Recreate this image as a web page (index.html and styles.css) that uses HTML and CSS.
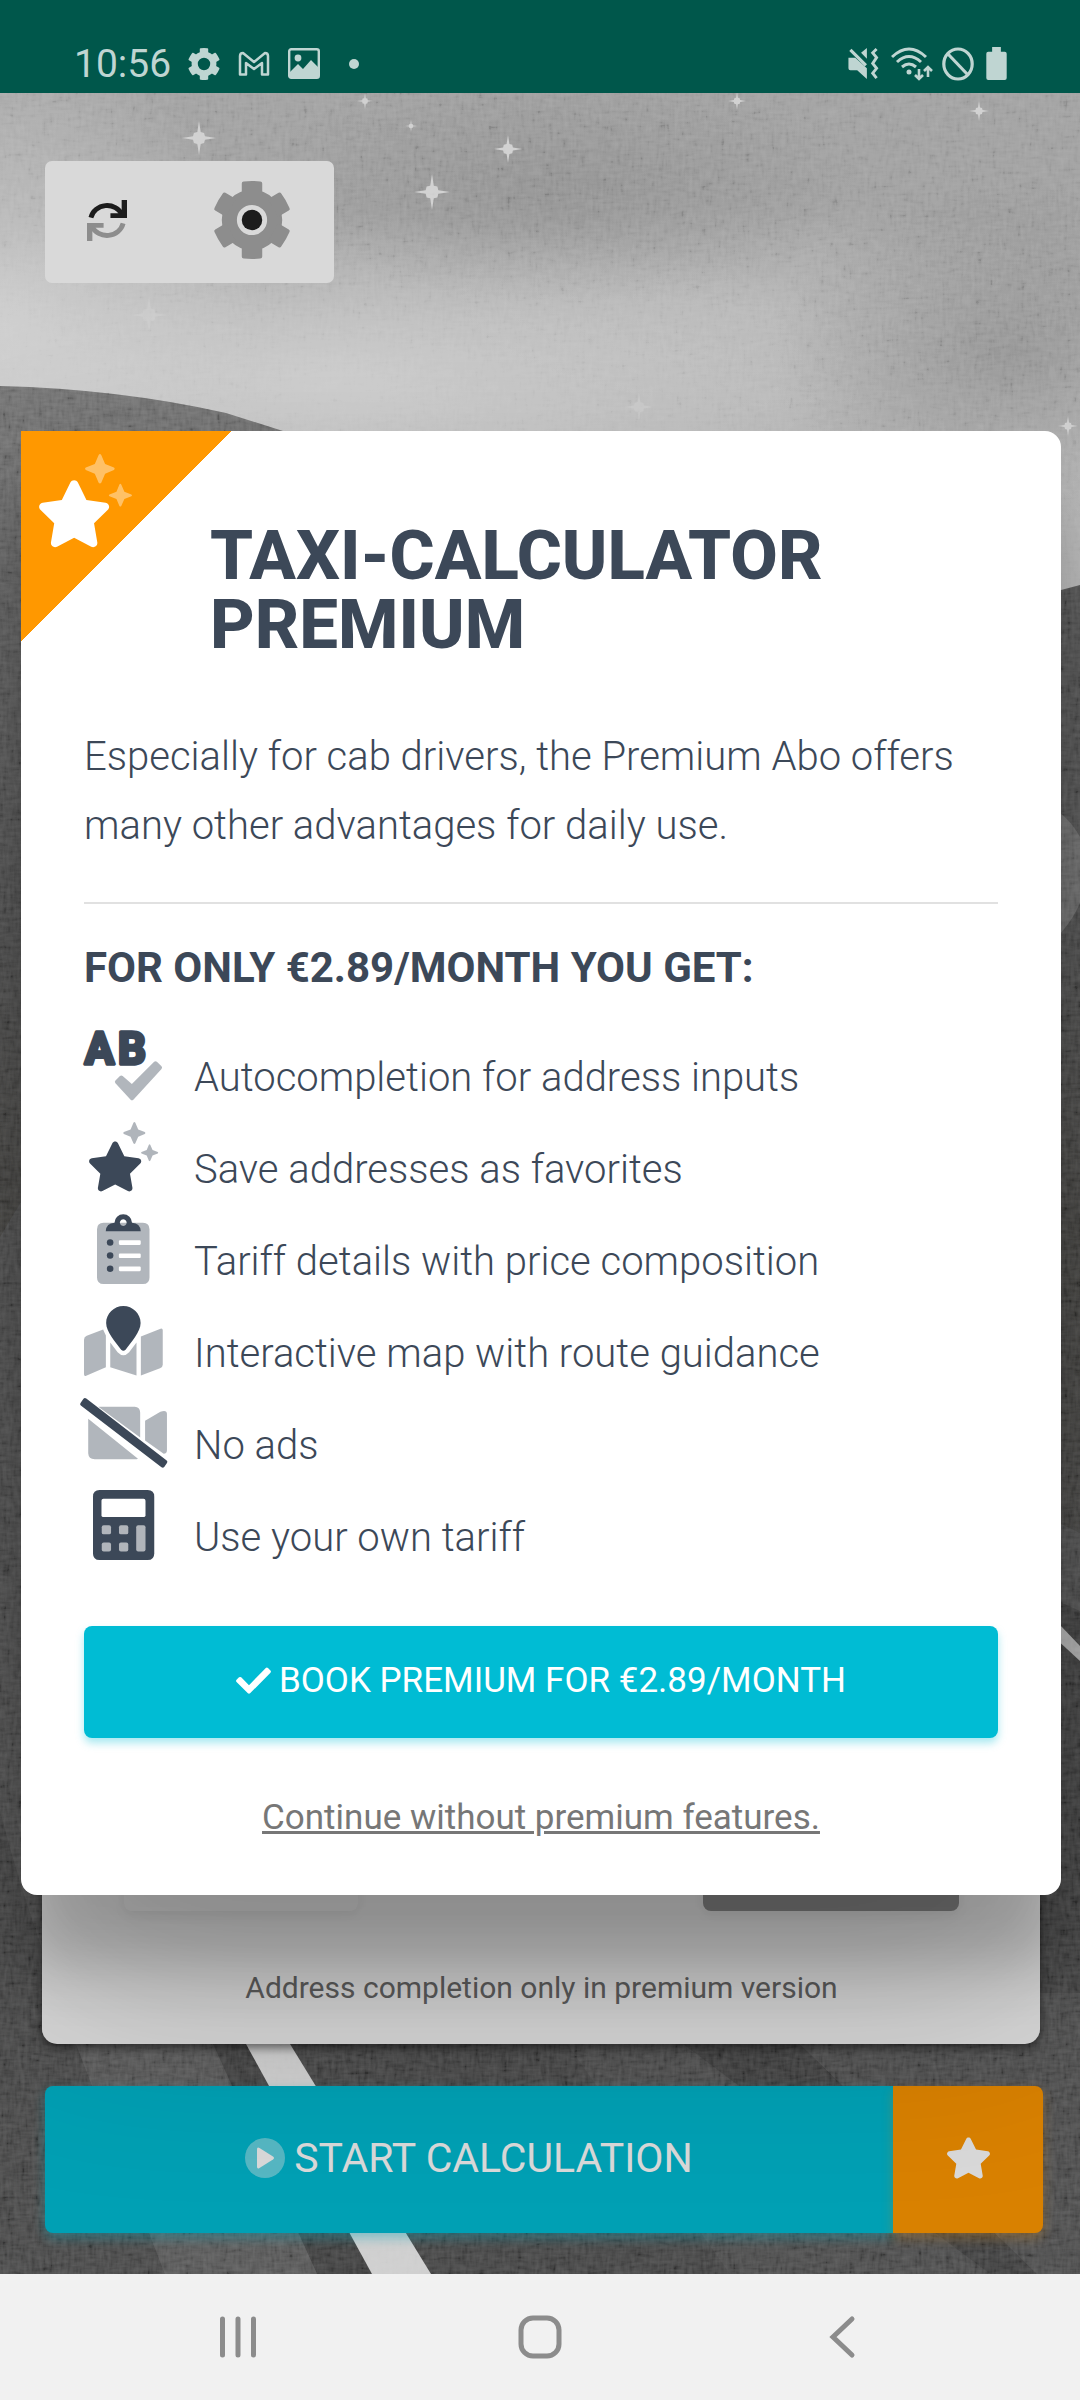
FILE: index.html
```html
<!DOCTYPE html>
<html lang="en">
<head>
<meta charset="utf-8">
<meta name="viewport" content="width=device-width, initial-scale=1">
<title>Taxi-Calculator</title>
<link rel="stylesheet" href="styles.css">
</head>
<body>
<svg class="defs" aria-hidden="true">
  <symbol id="star" viewBox="20 0 536 512">
    <path fill="currentColor" d="M259.3 17.8L194 150.2 47.9 171.5c-26.2 3.8-36.7 36.1-17.7 54.6l105.7 103-25 145.5c-4.5 26.3 23.2 46 46.4 33.7L288 439.6l130.7 68.7c23.2 12.2 50.9-7.4 46.4-33.7l-25-145.5 105.7-103c19-18.5 8.5-50.8-17.7-54.6L382 150.2 316.7 17.8c-11.7-23.6-45.6-23.9-57.4 0z"/>
  </symbol>
  <symbol id="stars" viewBox="0 0 512 512">
    <path transform="translate(-14 143) scale(.713)" fill="currentColor" d="M259.3 17.8L194 150.2 47.9 171.5c-26.2 3.8-36.7 36.1-17.7 54.6l105.7 103-25 145.5c-4.5 26.3 23.2 46 46.4 33.7L288 439.6l130.7 68.7c23.2 12.2 50.9-7.4 46.4-33.7l-25-145.5 105.7-103c19-18.5 8.5-50.8-17.7-54.6L382 150.2 316.7 17.8c-11.7-23.6-45.6-23.9-57.4 0z"/>
    <g fill="currentColor" opacity=".4">
      <path d="M325 5q7-9 14 0l21 50 48 19q8 6 0 13l-48 20-21 49q-7 9-14 0l-21-49-49-20q-8-7 0-13l49-19z"/>
      <path d="M438 166q5-7 10 0l17 39 38 15q7 5 0 10l-38 15-17 38q-5 7-10 0l-16-38-38-15q-7-5 0-10l38-15z"/>
    </g>
  </symbol>
  <symbol id="cog" viewBox="-40 -40 80 80">
    <g fill="currentColor">
      <path fill-rule="evenodd" d="M-31 0a31 31 0 1 0 62 0a31 31 0 1 0-62 0zM-15.500 0a15.500 15.500 0 1 1 31 0a15.500 15.500 0 1 1-31 0z"/>
      <path id="tooth" d="M-10.500-25V-37.500q0-2 2-2q8.500-1 17 0q2 0 2 2V-25z"/>
      <use href="#tooth" transform="rotate(60)"/>
      <use href="#tooth" transform="rotate(120)"/>
      <use href="#tooth" transform="rotate(180)"/>
      <use href="#tooth" transform="rotate(240)"/>
      <use href="#tooth" transform="rotate(300)"/>
    </g>
  </symbol>
  <symbol id="glint" viewBox="-10 -10 20 20">
    <path fill="currentColor" d="M0-10L1-3.500 3-3 3.500-1 10 0 3.500 1 3 3 1 3.500 0 10-1 3.500-3 3-3.500 1-10 0-3.500-1-3-3-1-3.500z"/>
  </symbol>
</svg>

<header class="status">
  <div class="status-group">
    <time class="clock">10:56</time>
    <svg class="s-cog" viewBox="0 0 32 32"><use href="#cog"/></svg>
    <svg class="s-mail" viewBox="0 0 32 26"><path d="M2 23.500V5Q2 2 5 2L16 11 27 2q3 0 3 3V23.500H24V12L16 18 8 12V23.500z" fill="none" stroke="currentColor" stroke-width="2.500" stroke-linejoin="round"/></svg>
    <svg class="s-pic" viewBox="0 0 32 31"><rect x="1.200" y="1.200" width="29.600" height="28.600" rx="2" fill="none" stroke="currentColor" stroke-width="2.400"/><circle cx="10" cy="10" r="3.400" fill="currentColor"/><path d="M2 24L10 16 15 21 23 12 30 19V30H2z" fill="currentColor"/></svg>
    <span class="dot"></span>
  </div>
  <div class="status-group status-right">
    <svg class="s-mute" viewBox="0 0 32 34"><path d="M1 11H8L20 22V33L10 24H3Q1 24 1 22zM20 1V12L14 6z" fill="currentColor"/><path d="M3 3L19 19" stroke="currentColor" stroke-width="3.200"/><path d="M30 2L26 6 30 11 26 17 30 22 26 27 30 32" fill="none" stroke="currentColor" stroke-width="3"/></svg>
    <svg class="s-wifi" viewBox="0 0 42 34"><g fill="none" stroke="currentColor" stroke-width="3"><path d="M1 10Q18-6 35 10"/><path d="M6 15Q18 4 30 15"/><path d="M11 20Q18 14 25 20"/><path d="M28 22V32M24 28L28 32 32 28M37 30V20M33 24L37 20 41 24" stroke-width="2.600"/></g><circle cx="18" cy="25" r="2.500" fill="currentColor"/></svg>
    <svg class="s-block" viewBox="0 0 32 34"><g fill="none" stroke="currentColor" stroke-width="3.200"><ellipse cx="16" cy="17" rx="14.200" ry="15"/><path d="M6 7L26 28"/></g></svg>
    <svg class="s-batt" viewBox="0 0 21 34"><path d="M6 0H15V5H19Q21 5 21 7V32Q21 34 19 34H2Q0 34 0 32V7Q0 5 2 5H6z" fill="currentColor"/></svg>
  </div>
</header>

<main class="app">
  <svg class="scene" viewBox="0 0 1080 2181" preserveAspectRatio="xMidYMid slice" aria-hidden="true">
    <defs>
      <linearGradient id="sky" x1="0" y1="0" x2="0" y2="1">
        <stop offset="0" stop-color="#bdbdbd"/>
        <stop offset=".2" stop-color="#bbbbbb"/>
        <stop offset=".5" stop-color="#d8d8d8"/>
        <stop offset="1" stop-color="#e8e8e8"/>
      </linearGradient>
      <radialGradient id="light"><stop offset="0" stop-color="#fff" stop-opacity=".7"/><stop offset="1" stop-color="#fff" stop-opacity="0"/></radialGradient>
      <radialGradient id="shade"><stop offset="0" stop-color="#8a8a8a" stop-opacity=".6"/><stop offset="1" stop-color="#8a8a8a" stop-opacity="0"/></radialGradient>
      <linearGradient id="hill" x1="0" y1="0" x2="0" y2="1">
        <stop offset="0" stop-color="#868686"/>
        <stop offset=".12" stop-color="#757575"/>
        <stop offset=".28" stop-color="#626262"/>
        <stop offset=".45" stop-color="#53524f"/>
        <stop offset="1" stop-color="#5c5c5c"/>
      </linearGradient>
      <filter id="linen" x="0" y="0" width="100%" height="100%">
        <feTurbulence type="fractalNoise" baseFrequency=".07 .28" numOctaves="2" seed="4" result="weft"/>
        <feTurbulence type="fractalNoise" baseFrequency=".28 .07" numOctaves="2" seed="9" result="warp"/>
        <feComposite in="weft" in2="warp" operator="arithmetic" k2=".5" k3=".5" result="weave"/>
        <feColorMatrix in="weave" values="1 0 0 0 0  1 0 0 0 0  1 0 0 0 0  0 0 0 0 1"/>
        <feComponentTransfer><feFuncR type="linear" slope="2" intercept="-.5"/><feFuncG type="linear" slope="2" intercept="-.5"/><feFuncB type="linear" slope="2" intercept="-.5"/></feComponentTransfer>
      </filter>
    </defs>
    <rect width="1080" height="600" fill="url(#sky)"/>
    <ellipse cx="0" cy="230" rx="260" ry="300" fill="url(#light)"/>
    <ellipse cx="330" cy="290" rx="560" ry="170" fill="url(#light)"/>
    <ellipse cx="760" cy="210" rx="320" ry="110" fill="url(#light)" opacity=".3"/>
    <ellipse cx="560" cy="90" rx="300" ry="120" fill="url(#shade)" opacity=".5"/>
    <ellipse cx="1010" cy="260" rx="240" ry="170" fill="url(#shade)" opacity=".8"/>
    <g color="#f6f6f6">
      <use href="#glint" x="182" y="28" width="34" height="34"/>
      <use href="#glint" x="357" y="0" width="16" height="16"/>
      <use href="#glint" x="405" y="27" width="12" height="12"/>
      <use href="#glint" x="494" y="42" width="28" height="28"/>
      <use href="#glint" x="414" y="81" width="36" height="36"/>
      <use href="#glint" x="728" y="-1" width="18" height="18"/>
      <use href="#glint" x="969" y="8" width="20" height="20"/>
      <use href="#glint" x="1058" y="323" width="20" height="20"/>
      <use href="#glint" x="131" y="204" width="36" height="36" opacity=".5"/>
      <use href="#glint" x="625" y="300" width="28" height="28" opacity=".6"/>
    </g>
    <path d="M0 293Q120 296 226 320L283 338 600 520 1061 504 1080 499V2181H0z" fill="url(#hill)"/>
    <path d="M1020 504L1061 497 1080 492V760H1020z" fill="#666"/>
    <path d="M1040 710Q1066 718 1080 744V810Q1068 838 1040 859z" fill="#858585"/>
    <path d="M0 1144L21 1109H1061V1431L1080 1440V2181H0z" fill="#616161"/>
    <path d="M1000 1482L1080 1518V2181H1000z" fill="#505050"/>
    <path d="M1040 1511L1080 1553V1568L1040 1531z" fill="#d8d8d8"/>
    <path d="M0 1717Q20 1800 76 1951L165 2181H0z" fill="#555"/>
    <path d="M190 1900L317 2181H480L330 1900z" fill="#4c4c4c"/>
    <path d="M76 1951L165 2181H317L211 1951L190 1905H60z" fill="#676767"/>
    <path d="M290 1951L431 2181H740L650 1951z" fill="#515151"/>
    <path d="M567 1951L730 2181H990L683 1951z" fill="#595959"/>
    <path d="M683 1951L990 2181H1037L800 1951z" fill="#4b4b4b"/>
    <path d="M800 1951L1037 2181H1080V1900H1000z" fill="#5a5a5a"/>
    <path d="M246 1951L372 2181H431L290 1951z" fill="#f4f4f4"/>
    <rect class="linen" width="1080" height="2181" filter="url(#linen)"/>
  </svg>

  <div class="toolbar">
    <button class="tool" type="button" aria-label="Refresh">
      <svg class="refresh" viewBox="0 0 42 42"><path d="M4 18A17 16 0 0 1 36 15" fill="none" stroke="#212121" stroke-width="5"/><path d="M24 13.500H35.500V0H41V18.500H24z" fill="#212121"/><g transform="rotate(180 20.500 21)"><path d="M4 18A17 16 0 0 1 36 15" fill="none" stroke="#a6a6a6" stroke-width="5"/><path d="M24 13.500H35.500V0H41V18.500H24z" fill="#a6a6a6"/></g></svg>
    </button>
    <button class="tool" type="button" aria-label="Settings">
      <svg class="gear" viewBox="0 0 80 80"><use href="#cog"/><circle cx="40" cy="40" r="10.500" fill="#212121"/></svg>
    </button>
  </div>

  <section class="form-card">
    <div class="form-actions">
      <button class="form-btn light" type="button" aria-label="Clear"></button>
      <button class="form-btn dark" type="button" aria-label="Options"></button>
    </div>
    <p class="note">Address completion only in premium version</p>
  </section>

  <div class="start-row">
    <button class="start" type="button">
      <svg class="play" viewBox="0 0 40 40"><circle cx="20" cy="20" r="20" fill="#fff" opacity=".4"/><path d="M12 11.500q0-3 2.500-1.500L28 18.500q2 1.500 0 3L14.500 30q-2.500 1.500-2.500-1.500z" fill="#fff"/></svg>
      START CALCULATION
    </button>
    <button class="fav" type="button" aria-label="Favorites"><svg viewBox="0 0 43 42"><use href="#star"/></svg></button>
  </div>

  <div class="scrim">
    <section class="modal" role="dialog" aria-labelledby="modal-title">
      <div class="corner"><svg viewBox="0 0 94 94"><use href="#stars"/></svg></div>
      <h1 id="modal-title">TAXI-CALCULATOR PREMIUM</h1>
      <p class="lead">Especially for cab drivers, the Premium Abo offers many other advantages for daily use.</p>
      <hr>
      <h2>FOR ONLY €2.89/MONTH YOU GET:</h2>
      <ul class="features">
        <li>
          <svg viewBox="0 0 576 512"><text class="ab" x="6 248" y="247">AB</text><path d="M230 369l33-32q10-8 20 0l67 58 163-162q10-8 20 0l34 33q8 10 0 19L361 510q-11 9-20 0L230 389q-9-10 0-20z" fill="currentColor" opacity=".4"/></svg>
          <span>Autocompletion for address inputs</span>
        </li>
        <li>
          <svg viewBox="0 0 512 512"><use href="#stars"/></svg>
          <span>Save addresses as favorites</span>
        </li>
        <li>
          <svg viewBox="0 0 384 512"><g fill="currentColor"><path opacity=".4" fill-rule="evenodd" d="M48 64H336q48 0 48 48V464q0 48-48 48H48Q0 512 0 464V112Q0 64 48 64zM168 192q-8 0-8 8v18q0 8 8 8H312q8 0 8-8V200q0-8-8-8zM168 288q-8 0-8 8v18q0 8 8 8H312q8 0 8-8V296q0-8-8-8zM168 384q-8 0-8 8v18q0 8 8 8H312q8 0 8-8V392q0-8-8-8z"/><circle cx="96" cy="208" r="24"/><circle cx="96" cy="304" r="24"/><circle cx="96" cy="400" r="24"/><path fill-rule="evenodd" d="M64 126Q68 66 128 64A64 62 0 0 1 256 64Q316 66 320 126zM192 38a25 25 0 1 0 .1 0z"/></g></svg>
          <span>Tariff details with price composition</span>
        </li>
        <li>
          <svg viewBox="0 0 576 512"><path fill="currentColor" opacity=".4" d="M20 217L140 171Q148 190 160 215V448L16 510Q0 516 0 500V246Q0 225 20 217zM192 267L246 338Q288 382 330 338L384 267V509L192 448zM416 223L560 166Q576 162 576 178V430Q576 448 556 456L416 508z"/><path fill="currentColor" d="M288 0C220 0 162 55 162 125C162 190 230 265 272 320Q288 336 304 320C346 265 414 190 414 125C414 55 356 0 288 0z"/></svg>
          <span>Interactive map with route guidance</span>
        </li>
        <li>
          <svg viewBox="0 0 640 512"><path fill="currentColor" opacity=".4" d="M152 64H400Q438 66 440 106V288L134 64zM60 152L424 444Q412 450 396 448H108Q62 446 60 404zM476 166L588 100Q636 84 636 116V384Q634 408 612 408L476 310z"/><path fill="currentColor" d="M46 4L634 458q10 8 2 18l-20 28q-9 10-20 2L6 54q-10-8-2-18L24 8q9-12 22-4z"/></svg>
          <span>No ads</span>
        </li>
        <li>
          <svg viewBox="0 0 448 512"><path fill="currentColor" d="M48 0H400q48 0 48 48V464q0 48-48 48H48Q0 512 0 464V48Q0 0 48 0z"/><g fill="#fff"><rect x="62" y="64" width="322" height="134" rx="14"/></g><g fill="#b1b5bb"><rect x="64" y="258" width="68" height="66" rx="14"/><rect x="190" y="258" width="68" height="66" rx="14"/><rect x="64" y="384" width="68" height="66" rx="14"/><rect x="190" y="384" width="68" height="66" rx="14"/><rect x="316" y="258" width="68" height="192" rx="14"/></g></svg>
          <span>Use your own tariff</span>
        </li>
      </ul>
      <button class="book" type="button">
        <svg viewBox="0 0 512 392"><path d="M174 384L8 218q-14-16 0-32l36-36q16-14 32 0L190 264 436 14q16-14 32 0l36 36q14 16 0 32L206 384q-16 14-32 0z" fill="#fff"/></svg>
        BOOK PREMIUM FOR €2.89/MONTH
      </button>
      <a class="skip" href="#">Continue without premium features.</a>
    </section>
  </div>
</main>

<nav class="navbar" aria-label="System navigation">
  <button type="button" aria-label="Recent apps"><svg viewBox="0 0 44 44"><path d="M6.500 4V40M22 4V40M37.500 4V40" /></svg></button>
  <button type="button" aria-label="Home"><svg viewBox="0 0 44 44"><rect x="3" y="3" width="38" height="38" rx="12"/></svg></button>
  <button type="button" aria-label="Back"><svg viewBox="0 0 44 44"><path d="M32 4L13 22 32 40"/></svg></button>
</nav>
</body>
</html>
```

FILE: styles.css
```css
* { box-sizing: border-box; }

body {
  margin: 0;
  min-height: 100vh;
  display: flex;
  flex-direction: column;
  font-family: Roboto, "Liberation Sans", sans-serif;
  color: #3c4858;
}

button {
  border: 0;
  padding: 0;
  font: inherit;
  color: inherit;
}

svg { display: block; flex: none; }
.defs { position: absolute; width: 0; height: 0; }

/* Status bar */
.status {
  height: 93px;
  padding: 32px 73px 0 74px;
  display: flex;
  justify-content: space-between;
  background: #00574b;
  color: #bfd5d2;
}
.status-group {
  height: 63px;
  display: flex;
  align-items: center;
}
.clock { font-size: 39px; line-height: 62px; margin-right: 17px; }
.s-cog { width: 32px; height: 32px; }
.s-mail { width: 32px; height: 26px; margin-left: 18px; }
.s-pic { width: 32px; height: 31px; margin-left: 18px; }
.dot { width: 10px; height: 10px; margin-left: 29px; border-radius: 50%; background: currentColor; }
.s-mute { width: 32px; height: 33px; }
.s-wifi { width: 42px; height: 34px; margin-left: 12px; }
.s-block { width: 32px; height: 34px; margin-left: 9px; }
.s-batt { width: 21px; height: 33px; margin-left: 12px; }

/* App screen */
.app {
  position: relative;
  flex: 1;
  display: flex;
  flex-direction: column;
  padding: 68px 37px 41px 45px;
  overflow: hidden;
}
.scene {
  position: absolute;
  inset: 0;
  width: 100%;
  height: 100%;
  z-index: -1;
}
.linen { opacity: .4; mix-blend-mode: soft-light; }

.toolbar {
  align-self: flex-start;
  display: flex;
  height: 122px;
  background: #fff;
  border-radius: 7px;
  overflow: hidden;
}
.tool {
  display: flex;
  align-items: center;
  justify-content: center;
  padding-bottom: 4px;
  background: none;
}
.tool:first-child { width: 124px; }
.tool:last-child { width: 165px; }
.refresh { width: 41px; height: 41px; }
.gear { width: 78px; height: 78px; color: #a6a6a6; }

.form-card {
  height: 1500px;
  margin: auto 3px 42px -3px;
  padding: 0 81px 38px 82px;
  display: flex;
  flex-direction: column;
  justify-content: flex-end;
  background: #fff;
  border-radius: 15px;
  box-shadow: 0 4px 10px rgba(0, 0, 0, .5);
}
.form-actions { display: flex; justify-content: space-between; }
.form-btn { height: 100px; border-radius: 8px; box-shadow: 0 5px 12px rgba(0, 0, 0, .06); }
.form-btn.light { width: 234px; background: #fff; }
.form-btn.dark { width: 256px; background: #999; }
.note {
  margin: 59px 0 0;
  font-size: 30px;
  line-height: 36px;
  text-align: center;
  color: #6f6f6f;
}

.start-row { display: flex; height: 147px; }
.start {
  flex: 1;
  display: flex;
  align-items: center;
  justify-content: center;
  gap: 9px;
  padding-bottom: 3px;
  background: #00bcd4;
  border-radius: 8px 0 0 8px;
  color: #fff;
  font-size: 41px;
  box-shadow: 0 5px 12px rgba(0, 188, 212, .4);
}
.play { width: 40px; height: 40px; }
.fav {
  width: 150px;
  display: flex;
  align-items: center;
  justify-content: center;
  padding-bottom: 3px;
  background: #ff9800;
  border-radius: 0 8px 8px 0;
  color: #fff;
  box-shadow: 0 5px 12px rgba(255, 152, 0, .3);
}
.fav svg { width: 43px; height: 42px; }

/* Premium dialog */
.scrim {
  position: absolute;
  inset: 0;
  padding: 338px 19px 0 21px;
  background: rgba(0, 0, 0, .15);
}
.modal {
  position: relative;
  padding: 90px 63px 56px;
  display: flex;
  flex-direction: column;
  background: #fff;
  border-radius: 0 16px 16px 16px;
  box-shadow: 0 71px 63px rgba(0, 0, 0, .2), 0 105px 202px rgba(0, 0, 0, .22);
}
.corner {
  position: absolute;
  top: 0;
  left: 0;
  width: 210px;
  height: 210px;
  padding: 23px 0 0 18px;
  background: linear-gradient(to bottom right, #ff9800 50%, transparent 50%);
  color: #fff;
}
.corner svg { width: 94px; height: 94px; }
h1 {
  margin: 0;
  padding-left: 126px;
  font-size: 69px;
  line-height: 69px;
  font-weight: 800;
}
.lead {
  margin: 63px 0 42px;
  font-size: 40px;
  line-height: 69px;
  font-weight: 300;
}
hr {
  width: 100%;
  height: 2px;
  margin: 0 0 43px;
  border: 0;
  background: #e1e1e1;
}
h2 {
  margin: 0;
  font-size: 42px;
  line-height: 42px;
  font-weight: 700;
}
.features {
  list-style: none;
  margin: 41px 0 53px;
  padding: 0;
  display: grid;
  gap: 9px;
  font-size: 40px;
  line-height: 70px;
  font-weight: 300;
}
.features li {
  display: grid;
  grid-template-columns: 79px 1fr;
  column-gap: 31px;
  justify-items: center;
}
.features svg { height: 70px; overflow: visible; }
.features span { justify-self: start; padding-top: 13px; }
.ab {
  font-size: 320px;
  font-weight: 700;
  fill: currentColor;
  stroke: currentColor;
  stroke-width: 26px;
  stroke-linejoin: round;
}
.book {
  height: 112px;
  display: flex;
  align-items: center;
  justify-content: center;
  gap: 8px;
  padding-bottom: 4px;
  background: #00bcd4;
  border-radius: 8px;
  color: #fff;
  font-size: 35px;
  box-shadow: 0 5px 8px rgba(0, 188, 212, .35);
}
.book svg { width: 35px; height: 27px; }
.skip {
  align-self: center;
  margin-top: 59px;
  font-size: 35px;
  line-height: 42px;
  color: #777;
}

/* System navigation */
.navbar {
  height: 126px;
  padding: 0 78px;
  display: grid;
  grid-template-columns: 320px 1fr 320px;
  background: #f1f1f1;
}
.navbar button {
  display: flex;
  align-items: center;
  justify-content: center;
  background: none;
}
.navbar svg {
  width: 44px;
  height: 44px;
  fill: none;
  stroke: #8c8c8c;
  stroke-width: 5;
  stroke-linecap: round;
}
```
